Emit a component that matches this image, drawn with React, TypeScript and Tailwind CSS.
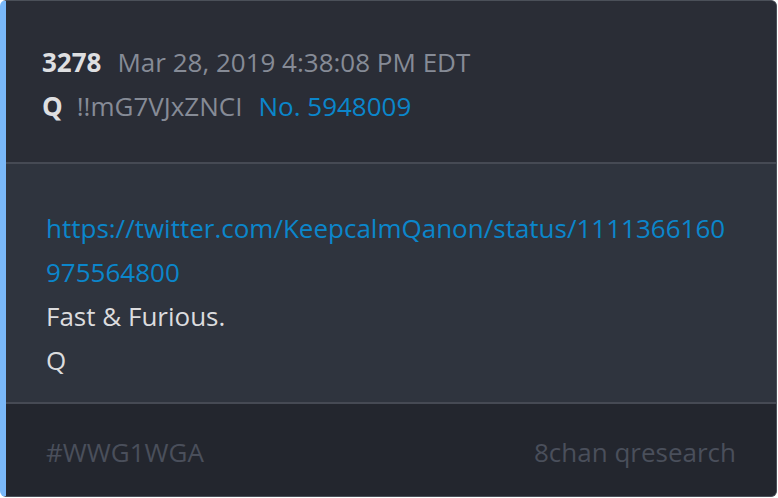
export default function App() {
  return (
    <div className="w-[778px] h-[498px] bg-white">
      <div
        className="w-[777px] h-[497px] flex flex-col overflow-hidden rounded-[6px] border border-[#4b5059] border-l-[6px] border-l-[#7ab8f8] bg-[#2f343e]"
        style={{ fontFamily: '"Open Sans", "Noto Sans", sans-serif' }}
      >
        {/* Header */}
        <div className="h-[163px] shrink-0 bg-[#2a2d36] border-b-2 border-[#464a54] pl-[36px] pt-[39px] text-[26px] leading-[44px]">
          <div className="flex items-baseline gap-[16px] whitespace-nowrap">
            <span className="font-bold text-[#dedfe1]">3278</span>
            <span className="text-[#868b96]">Mar 28, 2019 4:38:08 PM EDT</span>
          </div>
          <div className="flex items-baseline whitespace-nowrap">
            <span className="font-bold text-[#dedfe1] mr-[14px]">Q</span>
            <span className="text-[#868b96] mr-[16px]">!!mG7VJxZNCI</span>
            <span className="text-[#0b86cb]">No. 5948009</span>
          </div>
        </div>

        {/* Body */}
        <div className="h-[240px] shrink-0 bg-[#2f343e] border-b-2 border-[#464a54] pl-[40px] pr-[40px] pt-[42px] text-[26px] leading-[44px] text-[#dcdcde]">
          <a href="#" className="block text-[#0b86cb] break-all">
            https://twitter.com/KeepcalmQanon/status/1111366160975564800
          </a>
          <p>Fast &amp; Furious.</p>
          <p>Q</p>
        </div>

        {/* Footer */}
        <div className="flex-1 bg-[#23262e] px-[40px] pt-[5px] flex items-center justify-between text-[26px] text-[#4a4f5b]">
          <span>#WWG1WGA</span>
          <span>8chan qresearch</span>
        </div>
      </div>
    </div>
  );
}
